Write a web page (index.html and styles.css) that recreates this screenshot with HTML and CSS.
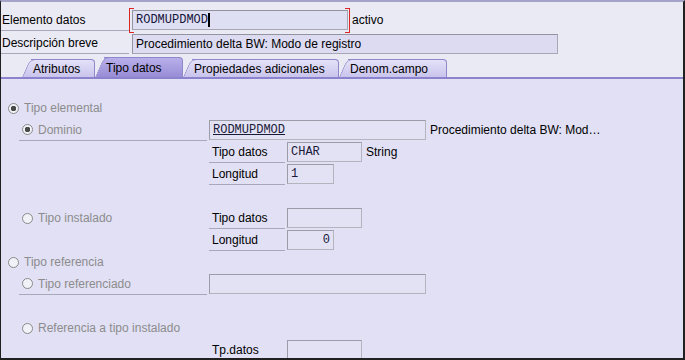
FILE: index.html
```html
<!DOCTYPE html>
<html lang="es">
<head>
    <meta charset="UTF-8">
    <title>Elemento datos</title>
    <link rel="stylesheet" href="styles.css">
</head>
<body>
    <div class="frame">
        <div class="head">
            <div class="row r1">
                <span class="lbl">Elemento datos</span>
                <span class="focus">
                    <span class="fld fld-main">RODMUPDMOD<span class="caret"></span></span>
                </span>
                <span class="status">activo</span>
            </div>
            <div class="row r2">
                <span class="lbl">Descripción breve</span>
                <span class="fld fld-desc">Procedimiento delta BW: Modo de registro</span>
            </div>
            <div class="tabs">
                <div class="tab t-attr">Atributos</div>
                <div class="tab t-type active">Tipo datos</div>
                <div class="tab t-prop">Propiedades adicionales</div>
                <div class="tab t-name">Denom.campo</div>
            </div>
        </div>

        <div class="panel">
            <div class="prow">
                <span class="opt"><span class="radio on"></span>Tipo elemental</span>
            </div>
            <div class="prow">
                <span class="opt sub ul"><span class="radio on"></span>Dominio</span>
                <span class="box w217 link">RODMUPDMOD</span>
                <span class="note">Procedimiento delta BW: Mod…</span>
            </div>
            <div class="prow">
                <span class="opt"></span>
                <span class="cap">Tipo datos</span>
                <span class="box w75">CHAR</span>
                <span class="note">String</span>
            </div>
            <div class="prow">
                <span class="opt"></span>
                <span class="cap">Longitud</span>
                <span class="box w47">1</span>
            </div>
            <div class="prow"></div>
            <div class="prow">
                <span class="opt sub"><span class="radio"></span>Tipo instalado</span>
                <span class="cap">Tipo datos</span>
                <span class="box w75"></span>
            </div>
            <div class="prow">
                <span class="opt"></span>
                <span class="cap">Longitud</span>
                <span class="box w47 num">0</span>
            </div>
            <div class="prow">
                <span class="opt"><span class="radio"></span>Tipo referencia</span>
            </div>
            <div class="prow">
                <span class="opt sub ul"><span class="radio"></span>Tipo referenciado</span>
                <span class="box w217"></span>
            </div>
            <div class="prow"></div>
            <div class="prow">
                <span class="opt sub"><span class="radio"></span>Referencia a tipo instalado</span>
            </div>
            <div class="prow">
                <span class="opt"></span>
                <span class="cap">Tp.datos</span>
                <span class="box w75"></span>
            </div>
        </div>
    </div>
</body>
</html>
```

FILE: styles.css
```css
/* SAP style data element screen */
body {
    margin: 0;
    font-family: "Liberation Sans", Arial, sans-serif;
    font-size: 12px;
    color: #000;
}

.frame {
    width: 685px;
    height: 360px;
    box-sizing: border-box;
    border-top: 2px solid #a4a4c8;
    border-left: 1px solid #202020;
    border-right: 2px solid #202020;
    border-bottom: 2px solid #202020;
    background: #e1e0f5;
    display: flex;
    flex-direction: column;
    overflow: hidden;
}

/* header fields */
.head {
    background: #eaeaf5;
    padding-top: 7px;
}

.row {
    display: flex;
    align-items: center;
}

.r1 {
    height: 22px;
    margin-bottom: 2px;
}

.r2 {
    height: 21px;
}

.lbl {
    width: 128px;
    height: 100%;
    box-sizing: border-box;
    padding-left: 1px;
    border-bottom: 1px solid #a8a8b8;
    display: flex;
    align-items: center;
}

.fld {
    height: 20px;
    box-sizing: border-box;
    border: 1px solid #a6a6b4;
    border-top-color: #94949f;
    border-left-color: #94949f;
    display: flex;
    align-items: center;
    padding: 0 3px;
}

.fld-main {
    width: 216px;
    background: #dfdff3;
    font-family: "Liberation Mono", "Courier New", monospace;
    font-size: 12px;
    color: #14143a;
}

.caret {
    display: inline-block;
    width: 2px;
    height: 14px;
    background: #000;
}

.fld-desc {
    width: 426px;
    margin-left: 3px;
    background: #dcdbf2;
}

.focus {
    position: relative;
    display: flex;
    align-items: center;
    height: 100%;
    padding: 0 2px 0 3px;
}

.focus::before,
.focus::after {
    content: "";
    position: absolute;
    top: -1px;
    bottom: -2px;
    width: 4px;
    border: 1.5px solid #dc2626;
}

.focus::before {
    left: 0;
    border-right: none;
}

.focus::after {
    right: 0;
    border-left: none;
}

.status {
    margin-left: 2px;
}

/* tab strip */
.tabs {
    display: flex;
    align-items: flex-end;
    height: 20px;
    margin-top: 3px;
    padding-left: 21px;
    border-bottom: 2px solid #8b83cd;
}

.tab {
    position: relative;
    z-index: 0;
    height: 18px;
    margin-left: 9px;
    padding-left: 2px;
    box-sizing: border-box;
    border: 1px solid #8e87c9;
    border-left: none;
    border-bottom: none;
    border-radius: 0 4px 0 0;
    background: linear-gradient(#e4e1f8, #c9c4ec);
    display: flex;
    align-items: center;
}

.tab::before {
    content: "";
    position: absolute;
    z-index: -1;
    left: -9px;
    top: -1px;
    bottom: 0;
    width: 9px;
    background: inherit;
    border-top: 1px solid #8e87c9;
    border-left: 1px solid #8e87c9;
    border-radius: 6px 0 0 0;
    transform: skewX(-24deg);
    transform-origin: 0 100%;
}

.tab.active {
    height: 20px;
    background: linear-gradient(#b8afea, #988dd6);
}

.t-attr { width: 64px; }
.t-type { width: 79px; }
.t-prop { width: 147px; }
.t-name { width: 99px; }

/* tab content */
.panel {
    flex: 1;
    padding-top: 18px;
}

.prow {
    display: flex;
    align-items: center;
    height: 22px;
}

.opt {
    width: 208px;
    height: 100%;
    box-sizing: border-box;
    padding-left: 7px;
    display: flex;
    align-items: center;
    color: #8c8c8c;
    flex: none;
}

.opt.sub {
    width: 188px;
    margin: 0 2px 0 18px;
    padding-left: 3px;
}

.opt.ul {
    border-bottom: 1px solid #a8a8b8;
}

.radio {
    width: 11px;
    height: 11px;
    box-sizing: border-box;
    border: 1px solid #8a8a8a;
    border-radius: 50%;
    background: #f1f1f8;
    margin-right: 5px;
    flex: none;
}

.radio.on {
    background: radial-gradient(circle, #4a4a4a 0 2.5px, #f1f1f8 3px);
}

.cap {
    width: 76px;
    height: 100%;
    box-sizing: border-box;
    padding-left: 3px;
    margin-right: 2px;
    border-bottom: 1px solid #a8a8b8;
    display: flex;
    align-items: center;
    flex: none;
}

.box {
    height: 20px;
    box-sizing: border-box;
    border: 1px solid #b4b4be;
    border-top-color: #9c9ca8;
    border-left-color: #9c9ca8;
    background: #e3e2f5;
    padding: 0 3px;
    display: flex;
    align-items: center;
    font-family: "Liberation Mono", "Courier New", monospace;
    font-size: 12px;
    color: #1a1a3a;
    flex: none;
}

.w217 { width: 217px; }
.w75 { width: 75px; }
.w47 { width: 47px; }

.num {
    justify-content: flex-end;
}

.link {
    text-decoration: underline;
}

.note {
    margin-left: 4px;
    white-space: nowrap;
}
```
